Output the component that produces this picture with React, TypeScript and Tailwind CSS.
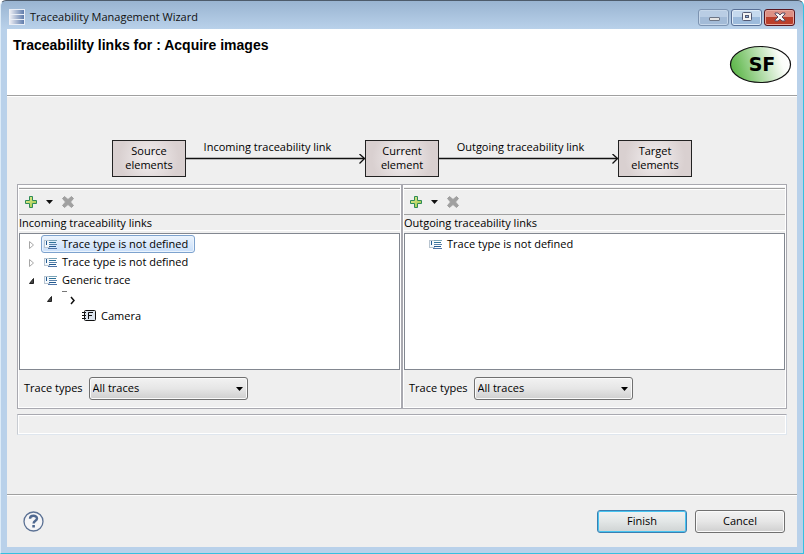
import type { ReactNode } from 'react';

function WizardIcon() {
  return (
    <svg width="16" height="16" viewBox="0 0 16 16" aria-hidden="true">
      <defs>
        <linearGradient id="wizardBar" x1="0" x2="1">
          <stop offset="0" stopColor="#f4f4f8" />
          <stop offset="1" stopColor="#5f7cac" />
        </linearGradient>
      </defs>
      <rect width="16" height="16" fill="#e9eef6" />
      <rect y="1" width="15" height="4" fill="url(#wizardBar)" />
      <rect y="6" width="15" height="4" fill="url(#wizardBar)" />
      <rect y="11" width="15" height="4" fill="url(#wizardBar)" />
    </svg>
  );
}

function TitleBar() {
  return (
    <header className="flex h-[28px] items-center pt-1 pr-0.5 pl-0.5">
      <WizardIcon />
      <h1 className="ml-[5px] flex-1 leading-4 text-[#101010]">Traceability Management Wizard</h1>
      <div className="flex gap-0.5">
        <button
          type="button"
          aria-label="Minimize"
          className="flex h-[17px] w-[31px] items-center justify-center rounded-[3px] border border-[#7c93b1] bg-linear-to-b from-[#b9cde4] from-50% to-[#a3bbd7] to-50% shadow-[inset_0_0_0_1px_#c6d7ea]"
        >
          <svg width="12" height="12" viewBox="0 0 12 12">
            <rect x="1.5" y="6.5" width="10" height="3" rx="0.5" fill="#e4e4e4" stroke="#6c7484" />
          </svg>
        </button>
        <button
          type="button"
          aria-label="Maximize"
          className="flex h-[17px] w-[31px] items-center justify-center rounded-[3px] border border-[#586f96] bg-linear-to-b from-[#c5d9ee] from-50% to-[#9dbbdc] to-50% shadow-[inset_0_0_0_1px_#dfebf7]"
        >
          <svg width="12" height="12" viewBox="0 0 12 12">
            <rect x="1.5" y="1.5" width="9" height="8" rx="1" fill="#f4f4f4" stroke="#535a75" />
            <rect x="4.5" y="4.5" width="3" height="2" fill="#8fb1d8" stroke="#535a75" />
          </svg>
        </button>
        <button
          type="button"
          aria-label="Close"
          className="flex h-[17px] w-[31px] items-center justify-center rounded-[3px] border border-[#5a1720] bg-linear-to-b from-[#dd9084] from-50% to-[#bb3f2b] to-50% shadow-[inset_0_0_0_1px_#e8aaa0]"
        >
          <svg width="12" height="10" viewBox="0 0 12 10">
            <path d="M1 1H4L6 3L8 1H11V2L8 5L11 8V9H8L6 7L4 9H1V8L4 5L1 2Z" fill="#f6f6f6" stroke="#5c4b60" />
          </svg>
        </button>
      </div>
    </header>
  );
}

function FunctionLogo() {
  return (
    <svg width="63" height="39" viewBox="0 0 63 39" role="img" aria-label="SF">
      <defs>
        <linearGradient id="logoFill" x1="0" y1="0.6" x2="1" y2="0.4">
          <stop offset="0" stopColor="#5cb548" />
          <stop offset="0.15" stopColor="#74c163" />
          <stop offset="0.85" stopColor="#fafdf9" />
          <stop offset="1" stopColor="#ffffff" />
        </linearGradient>
      </defs>
      <ellipse cx="31.5" cy="19.5" rx="30" ry="18" fill="url(#logoFill)" stroke="#111" strokeWidth="1.2" />
      <text x="33" y="26" textAnchor="middle" fontSize="19" fontWeight="700" className="font-['DejaVu_Sans',sans-serif]">
        SF
      </text>
    </svg>
  );
}

function DiagramBox({ children }: { children: ReactNode }) {
  return (
    <div className="flex h-[37px] w-[74px] items-center justify-center border border-[#222] bg-[radial-gradient(circle,#f3eff0,#d9d0d0_75%)] pb-0.5 text-center leading-[14px]">
      {children}
    </div>
  );
}

function DiagramLink({ children }: { children: ReactNode }) {
  return (
    <div className="flex h-[37px] w-[179px] flex-col">
      <span className="-ml-4 text-center leading-[14px]">{children}</span>
      <svg width="179" height="11" viewBox="0 0 179 11" fill="none" stroke="#111" aria-hidden="true">
        <path d="M0 4.5H178" strokeWidth="1.4" />
        <path d="M173.500 0L178.500 4.500L173.500 9.500" strokeWidth="1.3" />
      </svg>
    </div>
  );
}

function TraceIcon() {
  return (
    <svg width="13" height="10" viewBox="0 0 13 10" className="shrink-0" aria-hidden="true">
      <rect y="1" width="6" height="8" fill="#b9c5d0" />
      <rect x="1" y="2" width="5" height="6" fill="#f3f8fc" />
      <rect x="2" y="2" width="1" height="4" fill="#245b91" />
      <rect x="5" y="1" width="8" height="1" fill="#7ba4b8" />
      <rect x="5" y="3" width="7" height="1" fill="#2f7399" />
      <rect x="5" y="5" width="8" height="1" fill="#5d83ab" />
      <rect x="5" y="7" width="7" height="1" fill="#245b91" />
      <rect x="4" y="9" width="9" height="1" fill="#4f75a8" />
    </svg>
  );
}

function FunctionIcon() {
  return (
    <svg width="14" height="12" viewBox="0 0 14 12" className="shrink-0" aria-hidden="true">
      <rect x="2.500" y="0.500" width="11" height="10" rx="1" fill="#dce4ee" stroke="#111" />
      <path d="M0 2.500H4M0 5.500H4M0 8.500H4" stroke="#111" />
      <path d="M6.500 9V2.500H11M6.500 5.500H10" fill="none" stroke="#111" />
    </svg>
  );
}

function LinkIcon() {
  return (
    <svg width="14" height="16" viewBox="0 0 14 16" className="shrink-0" aria-hidden="true">
      <path d="M0 1.500H5" stroke="#777" />
      <path d="M9 7L12 10.500L9 14" fill="none" stroke="#111" strokeWidth="1.500" />
    </svg>
  );
}

function Twisty({ open }: { open: boolean }) {
  return (
    <button type="button" aria-label={open ? 'Collapse' : 'Expand'} className="flex w-3 shrink-0 items-center justify-center">
      <svg width="6" height="9" viewBox="0 0 6 9">
        {open ? (
          <path d="M4.500 2.500V7.500H0.500Z" fill="#444" stroke="#222" />
        ) : (
          <path d="M0.500 1.500L4.500 5L0.500 8.500Z" fill="#fff" stroke="#a6a6a6" />
        )}
      </svg>
    </button>
  );
}

function TreeRow({ indent, open, icon, label, selected }: {
  indent: string;
  open?: boolean;
  icon: ReactNode;
  label?: string;
  selected?: boolean;
}) {
  return (
    <li role="treeitem" aria-selected={!!selected} className={`flex h-[18px] items-center ${indent}`}>
      {open === undefined ? <span className="w-3 shrink-0" /> : <Twisty open={open} />}
      <span
        className={`ml-[3px] flex h-[18px] items-center gap-[5px] rounded-[3px] border pr-1.5 pl-0.5 leading-4 ${
          selected
            ? 'border-[#7da2ce] bg-linear-to-b from-[#ecf4fd] to-[#c9dffa] shadow-[inset_0_0_0_1px_#ebf4fd]'
            : 'border-transparent'
        }`}
      >
        {icon}
        {label}
      </span>
    </li>
  );
}

function ToolBar() {
  return (
    <div className="flex h-[25px] items-center border-b border-[#a0a0a0] pl-1.5">
      <button type="button" aria-label="Add link">
        <svg width="12" height="12" viewBox="0 0 12 12">
          <defs>
            <linearGradient id="plusFill" x1="0" y1="0" x2="1" y2="1">
              <stop offset="0" stopColor="#e7ee9a" />
              <stop offset="1" stopColor="#9bc540" />
            </linearGradient>
          </defs>
          <path d="M4.500 0.500H7.500V4.500H11.500V7.500H7.500V11.500H4.500V7.500H0.500V4.500H4.500Z" fill="url(#plusFill)" stroke="#2e8b57" />
        </svg>
      </button>
      <button type="button" aria-label="Add link menu" className="ml-[9px]">
        <svg width="7" height="4" viewBox="0 0 7 4">
          <path d="M0 0H7L3.500 4Z" fill="#111" />
        </svg>
      </button>
      <button type="button" aria-label="Delete link" className="ml-[9px]">
        <svg width="12" height="12" viewBox="0 0 12 12">
          <path d="M2.500 0.500L6 3.500L9.500 0.500L11.500 2.500L8.500 6L11.500 9.500L9.500 11.500L6 8.500L2.500 11.500L0.500 9.500L3.500 6L0.500 2.500Z" fill="#a0a0a0" stroke="#a0a0a0" />
        </svg>
      </button>
    </div>
  );
}

function LinksPane({ id, title, children }: { id: string; title: string; children: ReactNode }) {
  return (
    <section className="border border-t-2 border-white pt-px">
      <div className="border-t border-[#a0a0a0]">
        <div className="border-t border-white">
          <ToolBar />
          <h2 className="h-4 border-b border-white bg-[#efefef] leading-4">{title}</h2>
        </div>
      </div>
      <ul role="tree" aria-label={title} className="mt-0.5 h-[137px] border border-[#828790] bg-white pt-px">
        {children}
      </ul>
      <div className="flex h-[37px] items-center gap-[6px] pl-[5px]">
        <label htmlFor={id}>Trace types</label>
        <div className="relative">
          <select
            id={id}
            className="h-[23px] w-[159px] appearance-none rounded-[3px] border border-[#707070] bg-linear-to-b from-[#f2f2f2] via-[#e6e6e6] via-50% to-[#cfcfcf] pl-[3px] shadow-[inset_0_0_0_1px_#fafafa]"
          >
            <option>All traces</option>
          </select>
          <svg width="7" height="4" viewBox="0 0 7 4" className="pointer-events-none absolute top-[10px] right-[5px]" aria-hidden="true">
            <path d="M0 0H7L3.500 4Z" fill="#000" />
          </svg>
        </div>
      </div>
    </section>
  );
}

export default function App() {
  return (
    <div className="flex min-h-screen flex-col rounded-t-md border border-t-[#4d5b6b] border-r-[#35c0e0] border-b-[#35c0e0] border-l-[#dcebf8] bg-[#b9d1ea] bg-[linear-gradient(#99b4d1,#b9d1ea_28px)] px-1.5 pb-1.5 font-['Open_Sans','Noto_Sans',sans-serif] text-[11px] text-black">
      <TitleBar />
      <main className="flex flex-1 flex-col bg-[#efefef]">
        <div className="flex h-[67px] items-start justify-between border-b border-[#a0a0a0] bg-white pt-2 pr-[5px] pl-1.5">
          <p className="font-['Liberation_Sans',Arial,sans-serif] text-[14px] leading-4 font-bold">
            Traceabililty links for : Acquire images
          </p>
          <div className="pt-2">
            <FunctionLogo />
          </div>
        </div>
        <div className="flex flex-1 flex-col border-t border-white px-2.5 pt-[43px]">
          <div className="flex justify-center">
            <DiagramBox>Source<br />elements</DiagramBox>
            <DiagramLink>Incoming traceability link</DiagramLink>
            <DiagramBox>Current<br />element</DiagramBox>
            <DiagramLink>Outgoing traceability link</DiagramLink>
            <DiagramBox>Target<br />elements</DiagramBox>
          </div>
          <div className="mt-[7px] grid grid-cols-[1fr_2px_1fr] border border-[#a9a9b0]">
            <LinksPane id="incoming-types" title="Incoming traceability links">
              <TreeRow indent="pl-1.5" open={false} icon={<TraceIcon />} label="Trace type is not defined" selected />
              <TreeRow indent="pl-1.5" open={false} icon={<TraceIcon />} label="Trace type is not defined" />
              <TreeRow indent="pl-1.5" open icon={<TraceIcon />} label="Generic trace" />
              <TreeRow indent="pl-6" open icon={<LinkIcon />} />
              <TreeRow indent="pl-11" icon={<FunctionIcon />} label="Camera" />
            </LinksPane>
            <div className="bg-[#a9a9b0]" />
            <LinksPane id="outgoing-types" title="Outgoing traceability links">
              <TreeRow indent="pl-1.5" icon={<TraceIcon />} label="Trace type is not defined" />
            </LinksPane>
          </div>
          <div role="status" className="mt-[5px] h-[21px] border border-t-[#a9a9b0] border-r-[#dfe6ee] border-b-[#dfe6ee] border-l-[#c8ccd2] shadow-[inset_0_0_0_1px_#fff]" />
        </div>
        <footer className="flex h-[53px] items-center gap-2 border-t border-[#a0a0a0] pr-3 pl-4 shadow-[inset_0_1px_0_#fff]">
          <button type="button" aria-label="Help" className="mr-auto">
            <svg width="21" height="21" viewBox="0 0 21 21">
              <circle cx="10.500" cy="10.500" r="9.500" fill="#f5f5f7" stroke="#5b7194" strokeWidth="1.300" />
              <path d="M7 7.800C7 3.800 14 3.800 14 7.500C14 9.800 10.600 9.800 10.600 12.500" fill="none" stroke="#4f6890" strokeWidth="2.400" />
              <rect x="9.300" y="14" width="2.600" height="2.500" fill="#4f6890" />
            </svg>
          </button>
          <button type="button" className="h-[23px] w-[90px] rounded-[3px] border border-[#3c7fb1] bg-linear-to-b from-[#f2f2f2] via-[#e2e6e6] via-50% to-[#cfd3d3] shadow-[inset_0_0_0_1px_#48c4f0]">
            Finish
          </button>
          <button type="button" className="h-[23px] w-[90px] rounded-[3px] border border-[#707070] bg-linear-to-b from-[#f2f2f2] via-[#e6e6e6] via-50% to-[#cfcfcf] shadow-[inset_0_0_0_1px_#fafafa]">
            Cancel
          </button>
        </footer>
      </main>
    </div>
  );
}
